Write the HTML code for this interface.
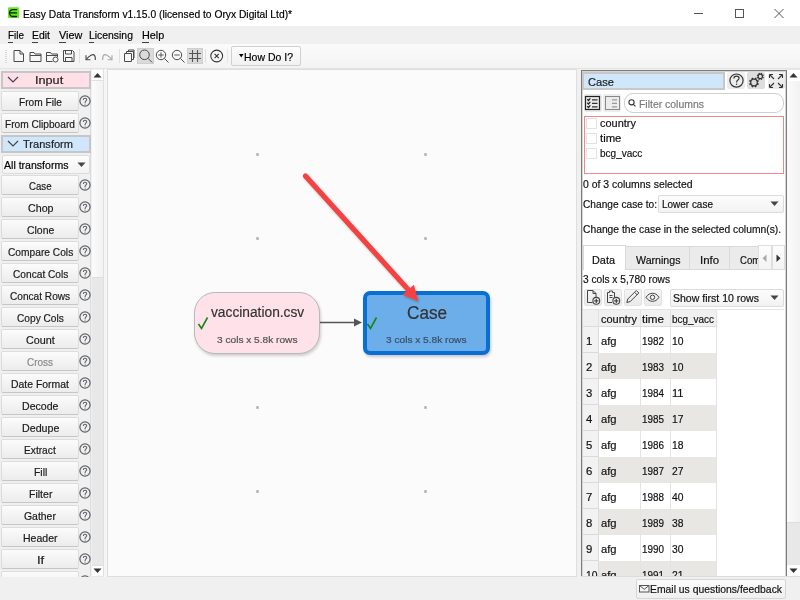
<!DOCTYPE html>
<html><head><meta charset="utf-8">
<style>
*{box-sizing:border-box;margin:0;padding:0}
html,body{width:800px;height:600px;overflow:hidden;background:#f0f0f0;font-family:"Liberation Sans",sans-serif;color:#000;position:relative}
.a{position:absolute}
.t{position:absolute;white-space:nowrap;line-height:1;font-family:"Liberation Sans",sans-serif;-webkit-text-stroke:0.2px currentColor;transform-origin:0 0}
svg{overflow:visible}
</style></head><body>
<div class="a" style="left:0px;top:0px;width:800px;height:26px;background:#fff"></div>
<svg class="a" style="left:8px;top:7px" width="12" height="12" viewBox="0 0 12 12"><rect x="0" y="0.3" width="11" height="10.8" rx="1.2" fill="#5fe81e"/><path d="M8.5 2.55H5A3.47 3.47 0 0 0 5 9.5H8.5M1.8 5.9H8.5" stroke="#0b1a05" stroke-width="1.3" fill="none" stroke-linecap="round"/></svg>
<div class="t" style="left:23.00px;top:8.57px;font-size:11.5px;transform:scaleX(0.8938);color:#000;">Easy Data Transform v1.15.0 (licensed to Oryx Digital Ltd)*</div>
<div class="a" style="left:694px;top:13px;width:9px;height:1px;background:#555"></div>
<div class="a" style="left:735px;top:9px;width:9px;height:9px;border:1px solid #555"></div>
<svg class="a" style="left:774px;top:9px" width="10" height="9" viewBox="0 0 10 9"><path d="M0.5 0L9.5 9M9.5 0L0.5 9" stroke="#555" stroke-width="1"/></svg>
<div class="a" style="left:0px;top:26px;width:800px;height:18px;background:#f0f0f0"></div>
<div class="t" style="left:7.50px;top:30.07px;font-size:11.5px;transform:scaleX(0.8566);color:#000;">File</div>
<div class="t" style="left:32.30px;top:30.07px;font-size:11.5px;transform:scaleX(0.9053);color:#000;">Edit</div>
<div class="t" style="left:58.50px;top:30.07px;font-size:11.5px;transform:scaleX(0.9410);color:#000;">View</div>
<div class="t" style="left:89.40px;top:30.07px;font-size:11.5px;transform:scaleX(0.9044);color:#000;">Licensing</div>
<div class="t" style="left:141.50px;top:30.07px;font-size:11.5px;transform:scaleX(0.9416);color:#000;">Help</div>
<div class="a" style="left:7.5px;top:41.5px;width:5px;height:1px;background:#444"></div>
<div class="a" style="left:32.3px;top:41.5px;width:6px;height:1px;background:#444"></div>
<div class="a" style="left:58.5px;top:41.5px;width:7px;height:1px;background:#444"></div>
<div class="a" style="left:89.4px;top:41.5px;width:5px;height:1px;background:#444"></div>
<div class="a" style="left:141.5px;top:41.5px;width:7px;height:1px;background:#444"></div>
<div class="a" style="left:0px;top:44px;width:800px;height:24px;background:linear-gradient(#fbfbfb,#f3f3f3)"></div>
<div class="a" style="left:0px;top:68px;width:800px;height:1px;background:#e3e3e3"></div>
<div class="a" style="left:5px;top:50px;width:2px;height:13px;background:repeating-linear-gradient(#d8d8d8 0 1px,transparent 1px 2px)"></div>
<svg class="a" style="left:0;top:44px" width="310" height="24" viewBox="0 44 310 24" fill="none" stroke="#4a4a4a" stroke-width="1">
<path d="M14 50.5h6l3.5 3.5v7.5h-9.5z M20 50.5v3.5h3.5"/>
<path d="M30 52.5h4l1 1.5h6v7.5h-11z M30 55.5h11"/>
<path d="M46.5 52.5h4l1 1.5h6v3 M46.5 55.5h11 M46.5 52.5v9h6"/><circle cx="55.5" cy="59.5" r="2.5"/>
<path d="M63.5 50.5h9l1.5 1.5v9.5h-10.5z M65.5 50.5v3.5h6v-3.5 M65.5 61.5v-4h6.5v4"/>
<path d="M86.2 59.3C89.5 55.5 93 53.5 94.5 55.3C95.6 56.6 95.5 58 95.3 60" stroke-width="1.2"/><path d="M86 55.3V59.7H90.4" stroke-width="1.1"/>
<path d="M111.8 59.3C108.5 55.5 105 53.5 103.5 55.3C102.4 56.6 102.5 58 102.7 60" stroke="#a8a8a8" stroke-width="1.2"/><path d="M112 55.3V59.7H107.6" stroke="#a8a8a8" stroke-width="1.1"/>
<path d="M124.5 53.5h7v8h-7z M126.5 53.5v-2h7v8h-2 M128.5 51.5v-1.5h5.5v8"/>
<rect x="137.5" y="48.5" width="16" height="15" fill="#dadada" stroke="#cfcfcf"/>
<circle cx="144.5" cy="54.8" r="4.8"/><path d="M148 58.3l4.2 4.2"/>
<circle cx="161" cy="55" r="4.7"/><path d="M164.4 58.4l4.1 4.1"/><path d="M158.3 55h5.4M161 52.3v5.4" stroke-width="0.9"/>
<circle cx="177" cy="55" r="4.7"/><path d="M180.4 58.4l4.1 4.1"/><path d="M174.3 55h5.4" stroke-width="0.9"/>
<rect x="187.5" y="48.5" width="15" height="15" fill="#dadada" stroke="#cfcfcf"/>
<path d="M192.5 50v12 M197.5 50v12 M189 53.5h12 M189 58.5h12" stroke="#555" stroke-width="1.1"/>
<circle cx="216.7" cy="56" r="5.9" stroke="#333" stroke-width="1.05"/><path d="M214.6 53.9l4.2 4.2 M218.8 53.9l-4.2 4.2" stroke="#333" stroke-width="1.1"/>
</svg>
<div class="a" style="left:79px;top:49px;width:1px;height:14px;background:#e0e0e0"></div>
<div class="a" style="left:119px;top:49px;width:1px;height:14px;background:#e0e0e0"></div>
<div class="a" style="left:205px;top:49px;width:1px;height:14px;background:#e0e0e0"></div>
<div class="a" style="left:227px;top:49px;width:1px;height:14px;background:#e6e6e6"></div>
<div class="a" style="left:231px;top:46px;width:70px;height:20px;border:1px solid #d0d0d0;border-radius:2px;background:linear-gradient(#fdfdfd,#f1f1f1)"></div>
<svg class="a" style="left:239px;top:54px" width="5" height="4"><path d="M0 0h4.5l-2.25 3.5z" fill="#000"/></svg>
<div class="t" style="left:244.20px;top:52.07px;font-size:11.5px;transform:scaleX(0.9119);color:#000;">How Do I?</div>
<div class="a" style="left:0px;top:69px;width:107px;height:508px;background:#f0f0f0"></div>
<div class="a" style="left:90px;top:69px;width:1px;height:508px;background:#dcdcdc"></div>
<div class="a" style="left:92px;top:70px;width:11px;height:507px;background:#e8e8e8"></div>
<div class="a" style="left:92px;top:70px;width:11px;height:11px;background:#fff;border-bottom:1px solid #e0e0e0"></div>
<div class="a" style="left:92px;top:81px;width:11px;height:197px;background:linear-gradient(90deg,#fbfbfb,#f2f2f2);border-bottom:1px solid #dedede"></div>
<div class="a" style="left:92px;top:565px;width:11px;height:11px;background:#fff;border-top:1px solid #e0e0e0"></div>
<div class="a" style="left:103px;top:69px;width:1px;height:508px;background:#e0e0e0"></div>
<div class="a" style="left:104px;top:69px;width:3px;height:508px;background:#f5f5f5"></div>
<svg class="a" style="left:93px;top:72px" width="9" height="7"><path d="M0.5 5.5h8l-4-4.5z" fill="#333"/></svg>
<svg class="a" style="left:93px;top:568px" width="9" height="7"><path d="M0.5 0.5h8l-4 4.5z" fill="#333"/></svg>
<div class="a" style="left:1px;top:71px;width:90px;height:18px;background:#ffe0e8;border:2px solid #c6c6c6"></div>
<svg class="a" style="left:7px;top:76px" width="12" height="8"><path d="M1 1l5 5 5-5" stroke="#444" stroke-width="1.2" fill="none"/></svg>
<div class="t" style="left:35.00px;top:75.07px;font-size:11.5px;transform:scaleX(1.1015);color:#222;">Input</div>
<div class="a" style="left:1px;top:135px;width:90px;height:18px;background:#cfe6fb;border:2px solid #c6c6c6"></div>
<svg class="a" style="left:7px;top:140px" width="12" height="8"><path d="M1 1l5 5 5-5" stroke="#444" stroke-width="1.2" fill="none"/></svg>
<div class="t" style="left:23.00px;top:139.07px;font-size:11.5px;transform:scaleX(0.9623);color:#222;">Transform</div>
<div class="a" style="left:1px;top:91px;width:78px;height:20px;background:linear-gradient(#fbfbfb,#ececec);border:1px solid #dcdcdc;border-bottom-color:#c6c6c6;border-radius:2px"></div>
<div class="t" style="left:18.85px;top:96.57px;font-size:11.5px;transform:scaleX(0.8815);color:#1a1a1a;">From File</div>
<svg class="a" style="left:78.2px;top:94px" width="14" height="14" viewBox="0 0 14 14" fill="none" stroke="#5f6368"><circle cx="7" cy="7" r="5.1" stroke-width="1.25"/><path d="M5.3 5.9C5.3 4.8 6 4.2 7 4.2S8.7 4.8 8.7 5.7C8.7 6.8 7.1 7 7.1 8.4V8.9" stroke-width="1.1"/><circle cx="7.1" cy="10.1" r="0.55" fill="#5f6368" stroke="none"/></svg>
<div class="a" style="left:1px;top:113px;width:78px;height:20px;background:linear-gradient(#fbfbfb,#ececec);border:1px solid #dcdcdc;border-bottom-color:#c6c6c6;border-radius:2px"></div>
<div class="t" style="left:5.30px;top:118.57px;font-size:11.5px;transform:scaleX(0.8824);color:#1a1a1a;">From Clipboard</div>
<svg class="a" style="left:78.2px;top:116px" width="14" height="14" viewBox="0 0 14 14" fill="none" stroke="#5f6368"><circle cx="7" cy="7" r="5.1" stroke-width="1.25"/><path d="M5.3 5.9C5.3 4.8 6 4.2 7 4.2S8.7 4.8 8.7 5.7C8.7 6.8 7.1 7 7.1 8.4V8.9" stroke-width="1.1"/><circle cx="7.1" cy="10.1" r="0.55" fill="#5f6368" stroke="none"/></svg>
<div class="a" style="left:2px;top:155px;width:88px;height:19px;background:linear-gradient(#fdfdfd,#f3f3f3);border:1px solid #dcdcdc;border-radius:2px"></div>
<div class="t" style="left:4.00px;top:160.27px;font-size:11.5px;transform:scaleX(0.9172);color:#000;">All transforms</div>
<svg class="a" style="left:77px;top:162px" width="9" height="6"><path d="M0.5 0.5h8l-4 4.5z" fill="#444"/></svg>
<div class="a" style="left:1px;top:175px;width:78px;height:20px;background:linear-gradient(#fbfbfb,#ececec);border:1px solid #dcdcdc;border-bottom-color:#c6c6c6;border-radius:2px"></div>
<div class="t" style="left:28.98px;top:180.57px;font-size:11.5px;transform:scaleX(0.8384);color:#1a1a1a;">Case</div>
<svg class="a" style="left:78.2px;top:178px" width="14" height="14" viewBox="0 0 14 14" fill="none" stroke="#5f6368"><circle cx="7" cy="7" r="5.1" stroke-width="1.25"/><path d="M5.3 5.9C5.3 4.8 6 4.2 7 4.2S8.7 4.8 8.7 5.7C8.7 6.8 7.1 7 7.1 8.4V8.9" stroke-width="1.1"/><circle cx="7.1" cy="10.1" r="0.55" fill="#5f6368" stroke="none"/></svg>
<div class="a" style="left:1px;top:197px;width:78px;height:20px;background:linear-gradient(#fbfbfb,#ececec);border:1px solid #dcdcdc;border-bottom-color:#c6c6c6;border-radius:2px"></div>
<div class="t" style="left:27.52px;top:202.57px;font-size:11.5px;transform:scaleX(0.9286);color:#1a1a1a;">Chop</div>
<svg class="a" style="left:78.2px;top:200px" width="14" height="14" viewBox="0 0 14 14" fill="none" stroke="#5f6368"><circle cx="7" cy="7" r="5.1" stroke-width="1.25"/><path d="M5.3 5.9C5.3 4.8 6 4.2 7 4.2S8.7 4.8 8.7 5.7C8.7 6.8 7.1 7 7.1 8.4V8.9" stroke-width="1.1"/><circle cx="7.1" cy="10.1" r="0.55" fill="#5f6368" stroke="none"/></svg>
<div class="a" style="left:1px;top:219px;width:78px;height:20px;background:linear-gradient(#fbfbfb,#ececec);border:1px solid #dcdcdc;border-bottom-color:#c6c6c6;border-radius:2px"></div>
<div class="t" style="left:26.61px;top:224.57px;font-size:11.5px;transform:scaleX(0.9091);color:#1a1a1a;">Clone</div>
<svg class="a" style="left:78.2px;top:222px" width="14" height="14" viewBox="0 0 14 14" fill="none" stroke="#5f6368"><circle cx="7" cy="7" r="5.1" stroke-width="1.25"/><path d="M5.3 5.9C5.3 4.8 6 4.2 7 4.2S8.7 4.8 8.7 5.7C8.7 6.8 7.1 7 7.1 8.4V8.9" stroke-width="1.1"/><circle cx="7.1" cy="10.1" r="0.55" fill="#5f6368" stroke="none"/></svg>
<div class="a" style="left:1px;top:241px;width:78px;height:20px;background:linear-gradient(#fbfbfb,#ececec);border:1px solid #dcdcdc;border-bottom-color:#c6c6c6;border-radius:2px"></div>
<div class="t" style="left:7.64px;top:246.57px;font-size:11.5px;transform:scaleX(0.8877);color:#1a1a1a;">Compare Cols</div>
<svg class="a" style="left:78.2px;top:244px" width="14" height="14" viewBox="0 0 14 14" fill="none" stroke="#5f6368"><circle cx="7" cy="7" r="5.1" stroke-width="1.25"/><path d="M5.3 5.9C5.3 4.8 6 4.2 7 4.2S8.7 4.8 8.7 5.7C8.7 6.8 7.1 7 7.1 8.4V8.9" stroke-width="1.1"/><circle cx="7.1" cy="10.1" r="0.55" fill="#5f6368" stroke="none"/></svg>
<div class="a" style="left:1px;top:263px;width:78px;height:20px;background:linear-gradient(#fbfbfb,#ececec);border:1px solid #dcdcdc;border-bottom-color:#c6c6c6;border-radius:2px"></div>
<div class="t" style="left:12.59px;top:268.57px;font-size:11.5px;transform:scaleX(0.8837);color:#1a1a1a;">Concat Cols</div>
<svg class="a" style="left:78.2px;top:266px" width="14" height="14" viewBox="0 0 14 14" fill="none" stroke="#5f6368"><circle cx="7" cy="7" r="5.1" stroke-width="1.25"/><path d="M5.3 5.9C5.3 4.8 6 4.2 7 4.2S8.7 4.8 8.7 5.7C8.7 6.8 7.1 7 7.1 8.4V8.9" stroke-width="1.1"/><circle cx="7.1" cy="10.1" r="0.55" fill="#5f6368" stroke="none"/></svg>
<div class="a" style="left:1px;top:285px;width:78px;height:20px;background:linear-gradient(#fbfbfb,#ececec);border:1px solid #dcdcdc;border-bottom-color:#c6c6c6;border-radius:2px"></div>
<div class="t" style="left:10.20px;top:290.57px;font-size:11.5px;transform:scaleX(0.8792);color:#1a1a1a;">Concat Rows</div>
<svg class="a" style="left:78.2px;top:288px" width="14" height="14" viewBox="0 0 14 14" fill="none" stroke="#5f6368"><circle cx="7" cy="7" r="5.1" stroke-width="1.25"/><path d="M5.3 5.9C5.3 4.8 6 4.2 7 4.2S8.7 4.8 8.7 5.7C8.7 6.8 7.1 7 7.1 8.4V8.9" stroke-width="1.1"/><circle cx="7.1" cy="10.1" r="0.55" fill="#5f6368" stroke="none"/></svg>
<div class="a" style="left:1px;top:307px;width:78px;height:20px;background:linear-gradient(#fbfbfb,#ececec);border:1px solid #dcdcdc;border-bottom-color:#c6c6c6;border-radius:2px"></div>
<div class="t" style="left:16.84px;top:312.57px;font-size:11.5px;transform:scaleX(0.8831);color:#1a1a1a;">Copy Cols</div>
<svg class="a" style="left:78.2px;top:310px" width="14" height="14" viewBox="0 0 14 14" fill="none" stroke="#5f6368"><circle cx="7" cy="7" r="5.1" stroke-width="1.25"/><path d="M5.3 5.9C5.3 4.8 6 4.2 7 4.2S8.7 4.8 8.7 5.7C8.7 6.8 7.1 7 7.1 8.4V8.9" stroke-width="1.1"/><circle cx="7.1" cy="10.1" r="0.55" fill="#5f6368" stroke="none"/></svg>
<div class="a" style="left:1px;top:329px;width:78px;height:20px;background:linear-gradient(#fbfbfb,#ececec);border:1px solid #dcdcdc;border-bottom-color:#c6c6c6;border-radius:2px"></div>
<div class="t" style="left:25.87px;top:334.57px;font-size:11.5px;transform:scaleX(0.9397);color:#1a1a1a;">Count</div>
<svg class="a" style="left:78.2px;top:332px" width="14" height="14" viewBox="0 0 14 14" fill="none" stroke="#5f6368"><circle cx="7" cy="7" r="5.1" stroke-width="1.25"/><path d="M5.3 5.9C5.3 4.8 6 4.2 7 4.2S8.7 4.8 8.7 5.7C8.7 6.8 7.1 7 7.1 8.4V8.9" stroke-width="1.1"/><circle cx="7.1" cy="10.1" r="0.55" fill="#5f6368" stroke="none"/></svg>
<div class="a" style="left:1px;top:351px;width:78px;height:20px;background:linear-gradient(#fbfbfb,#ececec);border:1px solid #dcdcdc;border-bottom-color:#c6c6c6;border-radius:2px"></div>
<div class="t" style="left:27.23px;top:356.57px;font-size:11.5px;transform:scaleX(0.8672);color:#888;">Cross</div>
<svg class="a" style="left:78.2px;top:354px" width="14" height="14" viewBox="0 0 14 14" fill="none" stroke="#5f6368"><circle cx="7" cy="7" r="5.1" stroke-width="1.25"/><path d="M5.3 5.9C5.3 4.8 6 4.2 7 4.2S8.7 4.8 8.7 5.7C8.7 6.8 7.1 7 7.1 8.4V8.9" stroke-width="1.1"/><circle cx="7.1" cy="10.1" r="0.55" fill="#5f6368" stroke="none"/></svg>
<div class="a" style="left:1px;top:373px;width:78px;height:20px;background:linear-gradient(#fbfbfb,#ececec);border:1px solid #dcdcdc;border-bottom-color:#c6c6c6;border-radius:2px"></div>
<div class="t" style="left:11.34px;top:378.57px;font-size:11.5px;transform:scaleX(0.9058);color:#1a1a1a;">Date Format</div>
<svg class="a" style="left:78.2px;top:376px" width="14" height="14" viewBox="0 0 14 14" fill="none" stroke="#5f6368"><circle cx="7" cy="7" r="5.1" stroke-width="1.25"/><path d="M5.3 5.9C5.3 4.8 6 4.2 7 4.2S8.7 4.8 8.7 5.7C8.7 6.8 7.1 7 7.1 8.4V8.9" stroke-width="1.1"/><circle cx="7.1" cy="10.1" r="0.55" fill="#5f6368" stroke="none"/></svg>
<div class="a" style="left:1px;top:395px;width:78px;height:20px;background:linear-gradient(#fbfbfb,#ececec);border:1px solid #dcdcdc;border-bottom-color:#c6c6c6;border-radius:2px"></div>
<div class="t" style="left:22.08px;top:400.57px;font-size:11.5px;transform:scaleX(0.9185);color:#1a1a1a;">Decode</div>
<svg class="a" style="left:78.2px;top:398px" width="14" height="14" viewBox="0 0 14 14" fill="none" stroke="#5f6368"><circle cx="7" cy="7" r="5.1" stroke-width="1.25"/><path d="M5.3 5.9C5.3 4.8 6 4.2 7 4.2S8.7 4.8 8.7 5.7C8.7 6.8 7.1 7 7.1 8.4V8.9" stroke-width="1.1"/><circle cx="7.1" cy="10.1" r="0.55" fill="#5f6368" stroke="none"/></svg>
<div class="a" style="left:1px;top:417px;width:78px;height:20px;background:linear-gradient(#fbfbfb,#ececec);border:1px solid #dcdcdc;border-bottom-color:#c6c6c6;border-radius:2px"></div>
<div class="t" style="left:21.58px;top:422.57px;font-size:11.5px;transform:scaleX(0.9290);color:#1a1a1a;">Dedupe</div>
<svg class="a" style="left:78.2px;top:420px" width="14" height="14" viewBox="0 0 14 14" fill="none" stroke="#5f6368"><circle cx="7" cy="7" r="5.1" stroke-width="1.25"/><path d="M5.3 5.9C5.3 4.8 6 4.2 7 4.2S8.7 4.8 8.7 5.7C8.7 6.8 7.1 7 7.1 8.4V8.9" stroke-width="1.1"/><circle cx="7.1" cy="10.1" r="0.55" fill="#5f6368" stroke="none"/></svg>
<div class="a" style="left:1px;top:439px;width:78px;height:20px;background:linear-gradient(#fbfbfb,#ececec);border:1px solid #dcdcdc;border-bottom-color:#c6c6c6;border-radius:2px"></div>
<div class="t" style="left:24.41px;top:444.57px;font-size:11.5px;transform:scaleX(0.8864);color:#1a1a1a;">Extract</div>
<svg class="a" style="left:78.2px;top:442px" width="14" height="14" viewBox="0 0 14 14" fill="none" stroke="#5f6368"><circle cx="7" cy="7" r="5.1" stroke-width="1.25"/><path d="M5.3 5.9C5.3 4.8 6 4.2 7 4.2S8.7 4.8 8.7 5.7C8.7 6.8 7.1 7 7.1 8.4V8.9" stroke-width="1.1"/><circle cx="7.1" cy="10.1" r="0.55" fill="#5f6368" stroke="none"/></svg>
<div class="a" style="left:1px;top:461px;width:78px;height:20px;background:linear-gradient(#fbfbfb,#ececec);border:1px solid #dcdcdc;border-bottom-color:#c6c6c6;border-radius:2px"></div>
<div class="t" style="left:33.61px;top:466.57px;font-size:11.5px;transform:scaleX(0.9041);color:#1a1a1a;">Fill</div>
<svg class="a" style="left:78.2px;top:464px" width="14" height="14" viewBox="0 0 14 14" fill="none" stroke="#5f6368"><circle cx="7" cy="7" r="5.1" stroke-width="1.25"/><path d="M5.3 5.9C5.3 4.8 6 4.2 7 4.2S8.7 4.8 8.7 5.7C8.7 6.8 7.1 7 7.1 8.4V8.9" stroke-width="1.1"/><circle cx="7.1" cy="10.1" r="0.55" fill="#5f6368" stroke="none"/></svg>
<div class="a" style="left:1px;top:483px;width:78px;height:20px;background:linear-gradient(#fbfbfb,#ececec);border:1px solid #dcdcdc;border-bottom-color:#c6c6c6;border-radius:2px"></div>
<div class="t" style="left:28.57px;top:488.57px;font-size:11.5px;transform:scaleX(0.9158);color:#1a1a1a;">Filter</div>
<svg class="a" style="left:78.2px;top:486px" width="14" height="14" viewBox="0 0 14 14" fill="none" stroke="#5f6368"><circle cx="7" cy="7" r="5.1" stroke-width="1.25"/><path d="M5.3 5.9C5.3 4.8 6 4.2 7 4.2S8.7 4.8 8.7 5.7C8.7 6.8 7.1 7 7.1 8.4V8.9" stroke-width="1.1"/><circle cx="7.1" cy="10.1" r="0.55" fill="#5f6368" stroke="none"/></svg>
<div class="a" style="left:1px;top:505px;width:78px;height:20px;background:linear-gradient(#fbfbfb,#ececec);border:1px solid #dcdcdc;border-bottom-color:#c6c6c6;border-radius:2px"></div>
<div class="t" style="left:24.35px;top:510.57px;font-size:11.5px;transform:scaleX(0.9066);color:#1a1a1a;">Gather</div>
<svg class="a" style="left:78.2px;top:508px" width="14" height="14" viewBox="0 0 14 14" fill="none" stroke="#5f6368"><circle cx="7" cy="7" r="5.1" stroke-width="1.25"/><path d="M5.3 5.9C5.3 4.8 6 4.2 7 4.2S8.7 4.8 8.7 5.7C8.7 6.8 7.1 7 7.1 8.4V8.9" stroke-width="1.1"/><circle cx="7.1" cy="10.1" r="0.55" fill="#5f6368" stroke="none"/></svg>
<div class="a" style="left:1px;top:527px;width:78px;height:20px;background:linear-gradient(#fbfbfb,#ececec);border:1px solid #dcdcdc;border-bottom-color:#c6c6c6;border-radius:2px"></div>
<div class="t" style="left:23.04px;top:532.57px;font-size:11.5px;transform:scaleX(0.9141);color:#1a1a1a;">Header</div>
<svg class="a" style="left:78.2px;top:530px" width="14" height="14" viewBox="0 0 14 14" fill="none" stroke="#5f6368"><circle cx="7" cy="7" r="5.1" stroke-width="1.25"/><path d="M5.3 5.9C5.3 4.8 6 4.2 7 4.2S8.7 4.8 8.7 5.7C8.7 6.8 7.1 7 7.1 8.4V8.9" stroke-width="1.1"/><circle cx="7.1" cy="10.1" r="0.55" fill="#5f6368" stroke="none"/></svg>
<div class="a" style="left:1px;top:549px;width:78px;height:20px;background:linear-gradient(#fbfbfb,#ececec);border:1px solid #dcdcdc;border-bottom-color:#c6c6c6;border-radius:2px"></div>
<div class="t" style="left:36.78px;top:554.57px;font-size:11.5px;transform:scaleX(1.1295);color:#1a1a1a;">If</div>
<svg class="a" style="left:78.2px;top:552px" width="14" height="14" viewBox="0 0 14 14" fill="none" stroke="#5f6368"><circle cx="7" cy="7" r="5.1" stroke-width="1.25"/><path d="M5.3 5.9C5.3 4.8 6 4.2 7 4.2S8.7 4.8 8.7 5.7C8.7 6.8 7.1 7 7.1 8.4V8.9" stroke-width="1.1"/><circle cx="7.1" cy="10.1" r="0.55" fill="#5f6368" stroke="none"/></svg>
<div class="a" style="left:1px;top:571px;width:78px;height:20px;background:linear-gradient(#fbfbfb,#ececec);border:1px solid #dcdcdc;border-bottom-color:#c6c6c6;border-radius:2px"></div>
<div class="t" style="left:39.80px;top:576.57px;font-size:11.5px;transform:scaleX(-0.0000);color:#1a1a1a;"></div>
<svg class="a" style="left:78.2px;top:574px" width="14" height="14" viewBox="0 0 14 14" fill="none" stroke="#5f6368"><circle cx="7" cy="7" r="5.1" stroke-width="1.25"/><path d="M5.3 5.9C5.3 4.8 6 4.2 7 4.2S8.7 4.8 8.7 5.7C8.7 6.8 7.1 7 7.1 8.4V8.9" stroke-width="1.1"/><circle cx="7.1" cy="10.1" r="0.55" fill="#5f6368" stroke="none"/></svg>
<div class="a" style="left:0px;top:577px;width:107px;height:23px;background:#f0f0f0"></div>
<div class="a" style="left:107px;top:69px;width:470px;height:508px;background:#fbfbfb;border:1px solid #dedede"></div>
<div class="a" style="left:256px;top:153px;width:3px;height:3px;background:#a6a6a6;box-shadow:inset 0 0 0 1px #c6c6c6"></div>
<div class="a" style="left:256px;top:237px;width:3px;height:3px;background:#a6a6a6;box-shadow:inset 0 0 0 1px #c6c6c6"></div>
<div class="a" style="left:256px;top:406px;width:3px;height:3px;background:#a6a6a6;box-shadow:inset 0 0 0 1px #c6c6c6"></div>
<div class="a" style="left:256px;top:490px;width:3px;height:3px;background:#a6a6a6;box-shadow:inset 0 0 0 1px #c6c6c6"></div>
<div class="a" style="left:424px;top:153px;width:3px;height:3px;background:#a6a6a6;box-shadow:inset 0 0 0 1px #c6c6c6"></div>
<div class="a" style="left:424px;top:237px;width:3px;height:3px;background:#a6a6a6;box-shadow:inset 0 0 0 1px #c6c6c6"></div>
<div class="a" style="left:424px;top:406px;width:3px;height:3px;background:#a6a6a6;box-shadow:inset 0 0 0 1px #c6c6c6"></div>
<div class="a" style="left:424px;top:490px;width:3px;height:3px;background:#a6a6a6;box-shadow:inset 0 0 0 1px #c6c6c6"></div>
<div class="a" style="left:194px;top:292px;width:126px;height:62px;background:#ffe1ea;border:1px solid #b9b9b9;border-radius:21px;box-shadow:1px 2px 3px rgba(0,0,0,0.18)"></div>
<div class="t" style="left:211.00px;top:304.23px;font-size:15.2px;transform:scaleX(0.9051);color:#333;">vaccination.csv</div>
<div class="t" style="left:217.00px;top:336.18px;font-size:9px;transform:scaleX(1.1246);color:#555;">3 cols x 5.8k rows</div>
<svg class="a" style="left:197px;top:316px" width="12" height="14"><path d="M1.5 8l3 4.5 6-11" stroke="#118811" stroke-width="1.6" fill="none"/></svg>
<svg class="a" style="left:320px;top:317px" width="44" height="10"><path d="M0 5.5h36" stroke="#555" stroke-width="1.3"/><path d="M34 1.5l8 4-8 4z" fill="#555"/></svg>
<div class="a" style="left:363px;top:291px;width:127px;height:64px;background:#6caeea;border:4px solid #0a6fd4;border-radius:7px;box-shadow:1px 2px 3px rgba(0,0,0,0.2)"></div>
<div class="t" style="left:406.70px;top:305.39px;font-size:17.5px;transform:scaleX(0.9800);color:#333;">Case</div>
<div class="t" style="left:386.00px;top:336.38px;font-size:9px;transform:scaleX(1.1246);color:#3d4f66;">3 cols x 5.8k rows</div>
<svg class="a" style="left:366px;top:316px" width="12" height="14"><path d="M1.5 8l3 4.5 6-11" stroke="#118811" stroke-width="1.6" fill="none"/></svg>
<svg class="a" style="left:0;top:0" width="800" height="600"><defs><filter id="sh" x="-20%" y="-20%" width="140%" height="140%"><feDropShadow dx="1" dy="1.5" stdDeviation="1.2" flood-color="#000" flood-opacity="0.25"/></filter></defs><g filter="url(#sh)"><path d="M305.5 176L409 290.5" stroke="#f24343" stroke-width="5.2" stroke-linecap="round"/><path d="M417.7 300.7L403 294.7L413.7 285.3z" fill="#f24343" stroke="#f24343" stroke-width="0.8" stroke-linejoin="round"/></g></svg>
<div class="a" style="left:577px;top:69px;width:4px;height:508px;background:#f0f0f0"></div>
<div class="a" style="left:581px;top:70px;width:206px;height:507px;background:#fff;border:1px solid #7c7c7c;border-bottom:none;box-shadow:inset 1px 1px 0 #d6d6d6,inset -1px 0 0 #d6d6d6"></div>
<div class="a" style="left:582px;top:72px;width:143px;height:18px;background:#cfe6fb;border:2px solid #c8c8c8"></div>
<div class="t" style="left:588.00px;top:77.27px;font-size:11.5px;transform:scaleX(0.9687);color:#222;">Case</div>
<div class="a" style="left:727px;top:72px;width:18px;height:17px;background:linear-gradient(#f2f2f2,#e9e9e9);border-radius:2px"></div>
<div class="a" style="left:747px;top:72px;width:18px;height:17px;background:#dedede;border-radius:2px"></div>
<div class="a" style="left:768px;top:72px;width:17px;height:17px;background:linear-gradient(#f2f2f2,#e9e9e9);border-radius:2px"></div>
<svg class="a" style="left:0;top:0" width="800" height="120" fill="none" stroke="#333"><circle cx="736.5" cy="80.6" r="6.6" stroke-width="1.2"/></svg>
<svg class="a" style="left:0;top:0" width="800" height="100" fill="none" stroke="#333"><path d="M733.9 78.4C733.9 76.9 735 76.1 736.5 76.1S739.1 77 739.1 78.3C739.1 79.9 736.6 80.1 736.6 82V82.5" stroke-width="1.15"/><circle cx="736.6" cy="84.2" r="0.7" fill="#333" stroke="none"/></svg>
<svg class="a" style="left:0;top:0" width="800" height="100" fill="none" stroke="#3a3a3a"><circle cx="754" cy="82.5" r="3.3" stroke-width="1.3"/><path d="M757.05 83.76L758.62 84.41M755.26 85.55L755.91 87.12M752.74 85.55L752.09 87.12M750.95 83.76L749.38 84.41M750.95 81.24L749.38 80.59M752.74 79.45L752.09 77.88M755.26 79.45L755.91 77.88M757.05 81.24L758.62 80.59" stroke-width="1.7"/><circle cx="760.3" cy="76.4" r="2.2" stroke-width="1.2"/><path d="M762.33 77.24L763.63 77.78M761.14 78.43L761.68 79.73M759.46 78.43L758.92 79.73M758.27 77.24L756.97 77.78M758.27 75.56L756.97 75.02M759.46 74.37L758.92 73.07M761.14 74.37L761.68 73.07M762.33 75.56L763.63 75.02" stroke-width="1.3"/></svg>
<svg class="a" style="left:768px;top:73px" width="16" height="16" viewBox="0 0 16 16" fill="none" stroke="#333" stroke-width="1.1"><path d="M1.5 1.5l4.5 4.5M1.5 1.5h3.5M1.5 1.5v3.5 M14.5 1.5l-4.5 4.5M14.5 1.5h-3.5M14.5 1.5v3.5 M1.5 14.5l4.5-4.5M1.5 14.5h3.5M1.5 14.5v-3.5 M14.5 14.5l-4.5-4.5M14.5 14.5h-3.5M14.5 14.5v-3.5"/></svg>
<div class="a" style="left:584px;top:94px;width:18px;height:18px;background:#e9e9e9;border-radius:2px"></div>
<div class="a" style="left:603px;top:94px;width:18px;height:18px;background:#ececec;border-radius:2px"></div>
<svg class="a" style="left:0;top:0" width="800" height="120" fill="none"><rect x="585.5" y="96.5" width="14" height="13" stroke="#222" stroke-width="1.2"/><path d="M587.3 99.3l1.2 1.2 1.8-2.2M587.3 102.8l1.2 1.2 1.8-2.2M587.3 106.3l1.2 1.2 1.8-2.2" stroke="#222" stroke-width="1.25"/><path d="M592 99.8h5.5M592 103.3h5.5M592 106.8h5.5" stroke="#333" stroke-width="1.2"/><rect x="605.5" y="96.5" width="14" height="13" stroke="#888" stroke-width="1"/><path d="M612 99.8h5M612 103.3h5M612 106.8h5" stroke="#999" stroke-width="1.2"/></svg>
<div class="a" style="left:624px;top:93px;width:160px;height:20px;border:1px solid #cfcfcf;border-radius:9px;background:#fff"></div>
<svg class="a" style="left:627px;top:98px" width="10" height="10" fill="none" stroke="#333" stroke-width="1.1"><circle cx="4.5" cy="4.3" r="2.6"/><path d="M6.4 6.3l2 2"/></svg>
<div class="t" style="left:639.00px;top:98.87px;font-size:11.5px;transform:scaleX(0.9074);color:#7a7a7a;">Filter columns</div>
<div class="a" style="left:583.5px;top:115.5px;width:200.5px;height:58.5px;border:1.5px solid #f08a8a"></div>
<div class="a" style="left:585.5px;top:117.5px;width:11px;height:11px;border:1px solid #e2e2e2;background:#fff"></div>
<div class="t" style="left:600.00px;top:118.27px;font-size:11.5px;transform:scaleX(0.9508);color:#111;">country</div>
<div class="a" style="left:585.5px;top:132.5px;width:11px;height:11px;border:1px solid #e2e2e2;background:#fff"></div>
<div class="t" style="left:600.00px;top:133.27px;font-size:11.5px;transform:scaleX(0.9853);color:#111;">time</div>
<div class="a" style="left:585.5px;top:147.5px;width:11px;height:11px;border:1px solid #e2e2e2;background:#fff"></div>
<div class="t" style="left:600.00px;top:148.27px;font-size:11.5px;transform:scaleX(0.8714);color:#111;">bcg_vacc</div>
<div class="t" style="left:582.80px;top:179.27px;font-size:11.5px;transform:scaleX(0.9064);color:#111;">0 of 3 columns selected</div>
<div class="t" style="left:582.80px;top:199.07px;font-size:11.5px;transform:scaleX(0.8832);color:#111;">Change case to:</div>
<div class="a" style="left:658px;top:195px;width:126px;height:18px;border:1px solid #dcdcdc;border-radius:2px;background:linear-gradient(#fdfdfd,#f2f2f2)"></div>
<div class="t" style="left:661.50px;top:199.07px;font-size:11.5px;transform:scaleX(0.8659);color:#111;">Lower case</div>
<svg class="a" style="left:770px;top:201px" width="9" height="6"><path d="M0.5 0.5h8l-4 4.5z" fill="#444"/></svg>
<div class="t" style="left:582.80px;top:223.77px;font-size:11.5px;transform:scaleX(0.8955);color:#111;">Change the case in the selected column(s).</div>
<div class="a" style="left:583px;top:269px;width:202px;height:1px;background:#d9d9d9"></div>
<div class="a" style="left:625px;top:246px;width:65px;height:24px;background:#ebebeb;border:1px solid #d9d9d9"></div>
<div class="a" style="left:689px;top:246px;width:41px;height:24px;background:#ebebeb;border:1px solid #d9d9d9"></div>
<div class="a" style="left:729px;top:246px;width:29px;height:24px;background:#ebebeb;border:1px solid #d9d9d9;border-right:none;overflow:hidden"></div>
<div class="a" style="left:583px;top:245px;width:43px;height:25px;background:#fff;border:1px solid #d9d9d9;border-bottom:none"></div>
<div class="t" style="left:592.00px;top:254.77px;font-size:11.5px;transform:scaleX(0.9464);color:#111;">Data</div>
<div class="t" style="left:635.80px;top:254.77px;font-size:11.5px;transform:scaleX(0.9235);color:#111;">Warnings</div>
<div class="t" style="left:700.40px;top:254.77px;font-size:11.5px;transform:scaleX(0.9933);color:#111;">Info</div>
<div class="a" style="left:729px;top:247px;width:29px;height:21px;overflow:hidden"><div class="t" style="left:10.70px;top:7.77px;font-size:11.5px;transform:scaleX(0.8388);color:#111;">Com</div></div>
<div class="a" style="left:758px;top:245px;width:14px;height:25px;background:linear-gradient(#fdfdfd,#f3f3f3);border:1px solid #dedede"></div>
<div class="a" style="left:771.5px;top:245px;width:13.5px;height:25px;background:linear-gradient(#fdfdfd,#f3f3f3);border:1px solid #dedede"></div>
<svg class="a" style="left:762px;top:254px" width="6" height="9"><path d="M4.5 0.5v7.5l-4-3.75z" fill="#aaa"/></svg>
<svg class="a" style="left:776px;top:254px" width="6" height="9"><path d="M0.5 0.5v7.5l4-3.75z" fill="#333"/></svg>
<div class="t" style="left:583.40px;top:273.97px;font-size:11.5px;transform:scaleX(0.8835);color:#111;">3 cols x 5,780 rows</div>
<div class="a" style="left:584px;top:288.5px;width:18px;height:17.5px;background:linear-gradient(#f4f4f4,#eaeaea);border:1px solid #e2e2e2;border-radius:2px"></div>
<div class="a" style="left:604px;top:288.5px;width:18px;height:17.5px;background:linear-gradient(#f4f4f4,#eaeaea);border:1px solid #e2e2e2;border-radius:2px"></div>
<div class="a" style="left:624px;top:288.5px;width:18px;height:17.5px;background:linear-gradient(#f4f4f4,#eaeaea);border:1px solid #e2e2e2;border-radius:2px"></div>
<div class="a" style="left:644px;top:288.5px;width:18px;height:17.5px;background:linear-gradient(#f4f4f4,#eaeaea);border:1px solid #e2e2e2;border-radius:2px"></div>
<svg class="a" style="left:0;top:0" width="800" height="320" fill="none" stroke="#444" stroke-width="1"><path d="M587.5 290.5h5.5l3 3v3.5 M587.5 290.5v12h5 M593 290.5v3h3"/><circle cx="596.3" cy="300.8" r="3.4" fill="#f0f0f0" stroke-width="1.1"/><path d="M594.2 300.8h4.2M596.3 298.7v4.2" stroke-width="1.2"/><path d="M607.5 292.5h2v-1.5h3v1.5h2v4.5 M607.5 292.5v10h4.5 M609.5 295.5h3M609.5 297.5h3"/><circle cx="616.3" cy="300.8" r="3.4" fill="#f0f0f0" stroke-width="1.1"/><path d="M614.2 300.8h4.2M616.3 298.7v4.2" stroke-width="1.2"/><path d="M626.8 302.5l1-3.5 8.5-8.5 2.5 2.5-8.5 8.5z M634.8 292.5l2.5 2.5"/><path d="M646 297.3c2-3 4-4 6.5-4s4.5 1 6.5 4c-2 3-4 4-6.5 4s-4.5-1-6.5-4z"/><circle cx="652.5" cy="297.3" r="2.2"/></svg>
<div class="a" style="left:669.5px;top:289px;width:114.5px;height:18px;border:1px solid #dcdcdc;border-radius:2px;background:linear-gradient(#fdfdfd,#f2f2f2)"></div>
<div class="t" style="left:672.50px;top:293.27px;font-size:11.5px;transform:scaleX(0.9152);color:#111;">Show first 10 rows</div>
<svg class="a" style="left:769.5px;top:295px" width="9" height="6"><path d="M0.5 0.5h8l-4 4.5z" fill="#444"/></svg>
<div class="a" style="left:583px;top:309px;width:201px;height:268px;background:#fff;border-top:1px solid #e4e4e4"></div>
<div class="a" style="left:583px;top:310px;width:134px;height:17px;background:#f0f0f0"></div>
<div class="a" style="left:598px;top:310px;width:1px;height:17px;background:#e2e2e2"></div>
<div class="a" style="left:640px;top:310px;width:1px;height:17px;background:#e2e2e2"></div>
<div class="a" style="left:670px;top:310px;width:1px;height:17px;background:#e2e2e2"></div>
<div class="a" style="left:716px;top:310px;width:1px;height:17px;background:#e2e2e2"></div>
<div class="a" style="left:583px;top:326px;width:134px;height:1px;background:#dcdcdc"></div>
<div class="t" style="left:600.50px;top:314.27px;font-size:11.5px;transform:scaleX(0.9549);color:#111;">country</div>
<div class="t" style="left:642.40px;top:314.27px;font-size:11.5px;transform:scaleX(1.0153);color:#111;">time</div>
<div class="t" style="left:672.40px;top:314.27px;font-size:11.5px;transform:scaleX(0.8627);color:#111;">bcg_vacc</div>
<div class="a" style="left:583px;top:327px;width:16px;height:26px;background:#f2f2f2;border-right:1px solid #dcdcdc;border-bottom:1px solid #dadada"></div>
<div class="a" style="left:599px;top:327px;width:118px;height:26px;background:#fff"></div>
<div class="a" style="left:640px;top:327px;width:1px;height:26px;background:#e4e4e4"></div>
<div class="a" style="left:670px;top:327px;width:1px;height:26px;background:#e4e4e4"></div>
<div class="a" style="left:716px;top:327px;width:1px;height:26px;background:#e4e4e4"></div>
<div class="t" style="left:586.00px;top:336.27px;font-size:11.5px;transform:scaleX(0.9842);color:#111;">1</div>
<div class="t" style="left:600.50px;top:336.27px;font-size:11.5px;transform:scaleX(0.9727);color:#111;">afg</div>
<div class="t" style="left:642.40px;top:336.27px;font-size:11.5px;transform:scaleX(0.8596);color:#111;">1982</div>
<div class="t" style="left:672.40px;top:336.27px;font-size:11.5px;transform:scaleX(0.8975);color:#111;">10</div>
<div class="a" style="left:583px;top:353px;width:16px;height:26px;background:#f2f2f2;border-right:1px solid #dcdcdc;border-bottom:1px solid #dadada"></div>
<div class="a" style="left:599px;top:353px;width:118px;height:26px;background:#e9e7e3"></div>
<div class="a" style="left:640px;top:353px;width:1px;height:26px;background:#e4e4e4"></div>
<div class="a" style="left:670px;top:353px;width:1px;height:26px;background:#e4e4e4"></div>
<div class="a" style="left:716px;top:353px;width:1px;height:26px;background:#e4e4e4"></div>
<div class="t" style="left:586.00px;top:362.27px;font-size:11.5px;transform:scaleX(0.9842);color:#111;">2</div>
<div class="t" style="left:600.50px;top:362.27px;font-size:11.5px;transform:scaleX(0.9727);color:#111;">afg</div>
<div class="t" style="left:642.40px;top:362.27px;font-size:11.5px;transform:scaleX(0.8596);color:#111;">1983</div>
<div class="t" style="left:672.40px;top:362.27px;font-size:11.5px;transform:scaleX(0.8975);color:#111;">10</div>
<div class="a" style="left:583px;top:379px;width:16px;height:26px;background:#f2f2f2;border-right:1px solid #dcdcdc;border-bottom:1px solid #dadada"></div>
<div class="a" style="left:599px;top:379px;width:118px;height:26px;background:#fff"></div>
<div class="a" style="left:640px;top:379px;width:1px;height:26px;background:#e4e4e4"></div>
<div class="a" style="left:670px;top:379px;width:1px;height:26px;background:#e4e4e4"></div>
<div class="a" style="left:716px;top:379px;width:1px;height:26px;background:#e4e4e4"></div>
<div class="t" style="left:586.00px;top:388.27px;font-size:11.5px;transform:scaleX(0.9842);color:#111;">3</div>
<div class="t" style="left:600.50px;top:388.27px;font-size:11.5px;transform:scaleX(0.9727);color:#111;">afg</div>
<div class="t" style="left:642.40px;top:388.27px;font-size:11.5px;transform:scaleX(0.8596);color:#111;">1984</div>
<div class="t" style="left:672.40px;top:388.27px;font-size:11.5px;transform:scaleX(0.9683);color:#111;">11</div>
<div class="a" style="left:583px;top:405px;width:16px;height:26px;background:#f2f2f2;border-right:1px solid #dcdcdc;border-bottom:1px solid #dadada"></div>
<div class="a" style="left:599px;top:405px;width:118px;height:26px;background:#e9e7e3"></div>
<div class="a" style="left:640px;top:405px;width:1px;height:26px;background:#e4e4e4"></div>
<div class="a" style="left:670px;top:405px;width:1px;height:26px;background:#e4e4e4"></div>
<div class="a" style="left:716px;top:405px;width:1px;height:26px;background:#e4e4e4"></div>
<div class="t" style="left:586.00px;top:414.27px;font-size:11.5px;transform:scaleX(0.9842);color:#111;">4</div>
<div class="t" style="left:600.50px;top:414.27px;font-size:11.5px;transform:scaleX(0.9727);color:#111;">afg</div>
<div class="t" style="left:642.40px;top:414.27px;font-size:11.5px;transform:scaleX(0.8596);color:#111;">1985</div>
<div class="t" style="left:672.40px;top:414.27px;font-size:11.5px;transform:scaleX(0.8975);color:#111;">17</div>
<div class="a" style="left:583px;top:431px;width:16px;height:26px;background:#f2f2f2;border-right:1px solid #dcdcdc;border-bottom:1px solid #dadada"></div>
<div class="a" style="left:599px;top:431px;width:118px;height:26px;background:#fff"></div>
<div class="a" style="left:640px;top:431px;width:1px;height:26px;background:#e4e4e4"></div>
<div class="a" style="left:670px;top:431px;width:1px;height:26px;background:#e4e4e4"></div>
<div class="a" style="left:716px;top:431px;width:1px;height:26px;background:#e4e4e4"></div>
<div class="t" style="left:586.00px;top:440.27px;font-size:11.5px;transform:scaleX(0.9842);color:#111;">5</div>
<div class="t" style="left:600.50px;top:440.27px;font-size:11.5px;transform:scaleX(0.9727);color:#111;">afg</div>
<div class="t" style="left:642.40px;top:440.27px;font-size:11.5px;transform:scaleX(0.8596);color:#111;">1986</div>
<div class="t" style="left:672.40px;top:440.27px;font-size:11.5px;transform:scaleX(0.8975);color:#111;">18</div>
<div class="a" style="left:583px;top:457px;width:16px;height:26px;background:#f2f2f2;border-right:1px solid #dcdcdc;border-bottom:1px solid #dadada"></div>
<div class="a" style="left:599px;top:457px;width:118px;height:26px;background:#e9e7e3"></div>
<div class="a" style="left:640px;top:457px;width:1px;height:26px;background:#e4e4e4"></div>
<div class="a" style="left:670px;top:457px;width:1px;height:26px;background:#e4e4e4"></div>
<div class="a" style="left:716px;top:457px;width:1px;height:26px;background:#e4e4e4"></div>
<div class="t" style="left:586.00px;top:466.27px;font-size:11.5px;transform:scaleX(0.9842);color:#111;">6</div>
<div class="t" style="left:600.50px;top:466.27px;font-size:11.5px;transform:scaleX(0.9727);color:#111;">afg</div>
<div class="t" style="left:642.40px;top:466.27px;font-size:11.5px;transform:scaleX(0.8596);color:#111;">1987</div>
<div class="t" style="left:672.40px;top:466.27px;font-size:11.5px;transform:scaleX(0.8975);color:#111;">27</div>
<div class="a" style="left:583px;top:483px;width:16px;height:26px;background:#f2f2f2;border-right:1px solid #dcdcdc;border-bottom:1px solid #dadada"></div>
<div class="a" style="left:599px;top:483px;width:118px;height:26px;background:#fff"></div>
<div class="a" style="left:640px;top:483px;width:1px;height:26px;background:#e4e4e4"></div>
<div class="a" style="left:670px;top:483px;width:1px;height:26px;background:#e4e4e4"></div>
<div class="a" style="left:716px;top:483px;width:1px;height:26px;background:#e4e4e4"></div>
<div class="t" style="left:586.00px;top:492.27px;font-size:11.5px;transform:scaleX(0.9842);color:#111;">7</div>
<div class="t" style="left:600.50px;top:492.27px;font-size:11.5px;transform:scaleX(0.9727);color:#111;">afg</div>
<div class="t" style="left:642.40px;top:492.27px;font-size:11.5px;transform:scaleX(0.8596);color:#111;">1988</div>
<div class="t" style="left:672.40px;top:492.27px;font-size:11.5px;transform:scaleX(0.8975);color:#111;">40</div>
<div class="a" style="left:583px;top:509px;width:16px;height:26px;background:#f2f2f2;border-right:1px solid #dcdcdc;border-bottom:1px solid #dadada"></div>
<div class="a" style="left:599px;top:509px;width:118px;height:26px;background:#e9e7e3"></div>
<div class="a" style="left:640px;top:509px;width:1px;height:26px;background:#e4e4e4"></div>
<div class="a" style="left:670px;top:509px;width:1px;height:26px;background:#e4e4e4"></div>
<div class="a" style="left:716px;top:509px;width:1px;height:26px;background:#e4e4e4"></div>
<div class="t" style="left:586.00px;top:518.27px;font-size:11.5px;transform:scaleX(0.9842);color:#111;">8</div>
<div class="t" style="left:600.50px;top:518.27px;font-size:11.5px;transform:scaleX(0.9727);color:#111;">afg</div>
<div class="t" style="left:642.40px;top:518.27px;font-size:11.5px;transform:scaleX(0.8596);color:#111;">1989</div>
<div class="t" style="left:672.40px;top:518.27px;font-size:11.5px;transform:scaleX(0.8975);color:#111;">38</div>
<div class="a" style="left:583px;top:535px;width:16px;height:26px;background:#f2f2f2;border-right:1px solid #dcdcdc;border-bottom:1px solid #dadada"></div>
<div class="a" style="left:599px;top:535px;width:118px;height:26px;background:#fff"></div>
<div class="a" style="left:640px;top:535px;width:1px;height:26px;background:#e4e4e4"></div>
<div class="a" style="left:670px;top:535px;width:1px;height:26px;background:#e4e4e4"></div>
<div class="a" style="left:716px;top:535px;width:1px;height:26px;background:#e4e4e4"></div>
<div class="t" style="left:586.00px;top:544.27px;font-size:11.5px;transform:scaleX(0.9842);color:#111;">9</div>
<div class="t" style="left:600.50px;top:544.27px;font-size:11.5px;transform:scaleX(0.9727);color:#111;">afg</div>
<div class="t" style="left:642.40px;top:544.27px;font-size:11.5px;transform:scaleX(0.8596);color:#111;">1990</div>
<div class="t" style="left:672.40px;top:544.27px;font-size:11.5px;transform:scaleX(0.8975);color:#111;">30</div>
<div class="a" style="left:583px;top:561px;width:16px;height:16px;background:#f2f2f2;border-right:1px solid #dcdcdc;border-bottom:1px solid #dadada"></div>
<div class="a" style="left:599px;top:561px;width:118px;height:16px;background:#e9e7e3"></div>
<div class="a" style="left:640px;top:561px;width:1px;height:16px;background:#e4e4e4"></div>
<div class="a" style="left:670px;top:561px;width:1px;height:16px;background:#e4e4e4"></div>
<div class="a" style="left:716px;top:561px;width:1px;height:16px;background:#e4e4e4"></div>
<div class="t" style="left:586.00px;top:570.27px;font-size:11.5px;transform:scaleX(0.8975);color:#111;">10</div>
<div class="t" style="left:600.50px;top:570.27px;font-size:11.5px;transform:scaleX(0.9727);color:#111;">afg</div>
<div class="t" style="left:642.40px;top:570.27px;font-size:11.5px;transform:scaleX(0.8596);color:#111;">1991</div>
<div class="t" style="left:672.40px;top:570.27px;font-size:11.5px;transform:scaleX(0.8975);color:#111;">21</div>
<div class="a" style="left:787px;top:69px;width:13px;height:508px;background:#e8e8e8"></div>
<div class="a" style="left:787px;top:70px;width:13px;height:11px;background:#fff"></div>
<div class="a" style="left:787px;top:81px;width:13px;height:442px;background:linear-gradient(90deg,#fbfbfb,#f2f2f2);border-bottom:1px solid #dedede"></div>
<div class="a" style="left:787px;top:565px;width:13px;height:11px;background:#fff"></div>
<svg class="a" style="left:789px;top:72px" width="9" height="7"><path d="M0.5 5.5h8l-4-4.5z" fill="#333"/></svg>
<svg class="a" style="left:789px;top:568px" width="9" height="7"><path d="M0.5 0.5h8l-4 4.5z" fill="#333"/></svg>
<div class="a" style="left:581px;top:576px;width:219px;height:1px;background:#dcdcdc"></div>
<div class="a" style="left:0px;top:577px;width:800px;height:23px;background:#f0f0f0"></div>
<div class="a" style="left:636px;top:579px;width:150px;height:20px;border:1px solid #d6d6d6;border-radius:2px;background:linear-gradient(#fbfbfb,#efefef)"></div>
<svg class="a" style="left:639px;top:585px" width="11" height="8" fill="none" stroke="#555" stroke-width="1"><rect x="0.5" y="0.5" width="9.5" height="6.5"/><path d="M0.5 0.5l4.75 3.8 4.75-3.8"/></svg>
<div class="t" style="left:649.70px;top:584.07px;font-size:11.5px;transform:scaleX(0.9017);color:#111;">Email us questions/feedback</div>
</body></html>
